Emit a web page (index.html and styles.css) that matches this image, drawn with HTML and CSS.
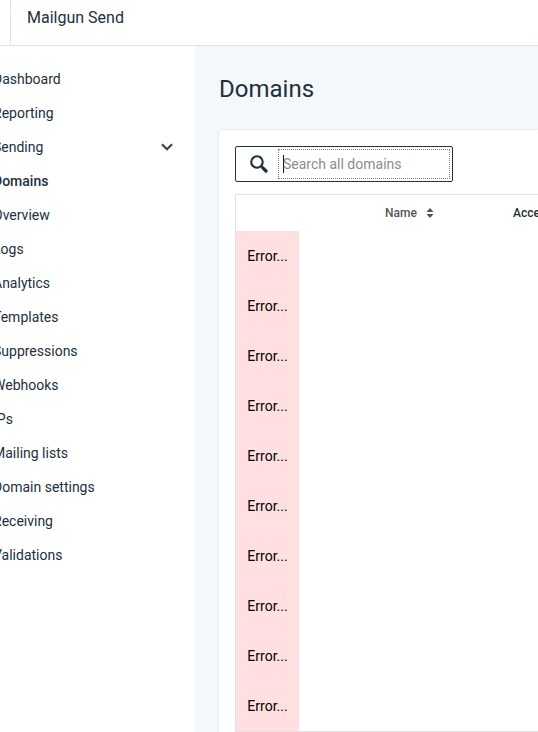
FILE: index.html
```html
<!DOCTYPE html>
<html lang="en">
<head>
    <meta charset="UTF-8">
    <meta name="viewport" content="width=device-width, initial-scale=1.0">
    <title>Domains - Mailgun Send</title>
    <link rel="stylesheet" href="styles.css">
</head>
<body>
    <div class="app">
        <header class="topbar">
            <div class="product-name">Mailgun Send</div>
        </header>

        <div class="layout">
            <nav class="sidebar">
                <a href="#">Dashboard</a>
                <a href="#">Reporting</a>
                <button class="nav-toggle" type="button" aria-expanded="true">
                    Sending
                    <svg class="chevron" viewBox="0 0 12 8" aria-hidden="true">
                        <path d="M0.9 1.2L6 6.2L11.1 1.2" fill="none" stroke="currentColor" stroke-width="2.3"/>
                    </svg>
                </button>
                <a href="#" class="active">Domains</a>
                <a href="#">Overview</a>
                <a href="#">Logs</a>
                <a href="#">Analytics</a>
                <a href="#">Templates</a>
                <a href="#">Suppressions</a>
                <a href="#">Webhooks</a>
                <a href="#">IPs</a>
                <a href="#">Mailing lists</a>
                <a href="#">Domain settings</a>
                <a href="#">Receiving</a>
                <a href="#">Validations</a>
            </nav>

            <main class="content">
                <h1>Domains</h1>

                <section class="panel">
                    <label class="search-box">
                        <svg class="search-icon" viewBox="0 0 16 16" aria-hidden="true">
                            <circle cx="6.2" cy="6.2" r="5.1" fill="none" stroke="currentColor" stroke-width="1.9"/>
                            <path d="M10 10L11.4 11.4" stroke="currentColor" stroke-width="2"/>
                            <path d="M11.6 11.6L14.2 14.2" stroke="currentColor" stroke-width="2.9" stroke-linecap="round"/>
                        </svg>
                        <input type="text" placeholder="Search all domains" aria-label="Search all domains">
                    </label>

                    <table class="domains-table">
                        <thead>
                            <tr>
                                <th class="col-status"></th>
                                <th class="col-name">
                                    <button class="sort-button" type="button">
                                        Name
                                        <svg class="sort-icon" viewBox="0 0 8 10" aria-hidden="true">
                                            <path d="M4 0L7.6 4H0.4ZM4 10L7.6 6H0.4Z" fill="currentColor"/>
                                        </svg>
                                    </button>
                                </th>
                                <th class="col-access">Access</th>
                            </tr>
                        </thead>
                        <tbody>
                            <tr><td><div class="error-cell">Error...</div></td><td></td><td></td></tr>
                            <tr><td><div class="error-cell">Error...</div></td><td></td><td></td></tr>
                            <tr><td><div class="error-cell">Error...</div></td><td></td><td></td></tr>
                            <tr><td><div class="error-cell">Error...</div></td><td></td><td></td></tr>
                            <tr><td><div class="error-cell">Error...</div></td><td></td><td></td></tr>
                            <tr><td><div class="error-cell">Error...</div></td><td></td><td></td></tr>
                            <tr><td><div class="error-cell">Error...</div></td><td></td><td></td></tr>
                            <tr><td><div class="error-cell">Error...</div></td><td></td><td></td></tr>
                            <tr><td><div class="error-cell">Error...</div></td><td></td><td></td></tr>
                            <tr><td><div class="error-cell">Error...</div></td><td></td><td></td></tr>
                        </tbody>
                    </table>
                </section>
            </main>
        </div>
    </div>
</body>
</html>
```

FILE: styles.css
```css
* {
    box-sizing: border-box;
}

body {
    margin: 0;
    height: 100vh;
    overflow: hidden;
    background-color: #fff;
    color: #232f3a;
    font-family: Roboto, Arial, sans-serif;
    font-size: 14px;
    line-height: 20px;
}

button {
    padding: 0;
    border: none;
    background: none;
    color: inherit;
    font: inherit;
    cursor: pointer;
}

/* the app is shifted a little past the left edge of the window */
.app {
    display: flex;
    flex-direction: column;
    min-height: 100vh;
    margin-left: -7px;
}

.topbar {
    display: flex;
    height: 46px;
    padding-left: 17px;
    border-bottom: 1px solid #e1e2e4;
}

.product-name {
    padding: 8px 16px;
    border-left: 1px solid #e1e2e4;
    font-size: 16px;
}

.layout {
    display: flex;
    flex: 1;
}

.sidebar {
    display: flex;
    flex-direction: column;
    flex: none;
    width: 202px;
    padding-top: 16px;
}

.sidebar a,
.nav-toggle {
    display: flex;
    align-items: center;
    justify-content: space-between;
    height: 34px;
    padding-right: 22px;
    color: inherit;
    text-decoration: none;
}

.sidebar .active {
    font-weight: 500;
}

.chevron {
    width: 12px;
    height: 8px;
    color: #3d4650;
}

.content {
    flex: 1;
    min-width: 0;
    padding: 24px 0 0 24px;
    background-color: #f4f8fb;
}

h1 {
    margin: 0 0 22px;
    font-size: 24px;
    font-weight: 400;
    line-height: 38px;
}

.panel {
    padding: 16px 0 16px 16px;
    border-radius: 4px 0 0 0;
    background-color: #fff;
    box-shadow: 0 0 2px rgba(35, 47, 58, 0.2);
}

.search-box {
    display: flex;
    align-items: center;
    width: 218px;
    height: 36px;
    padding: 0 2px 0 14px;
    border: 1px solid #232f3a;
    border-radius: 2px;
}

.search-icon {
    flex: none;
    width: 18px;
    height: 18px;
    margin-right: 10px;
}

.search-box input {
    flex: 1;
    min-width: 0;
    height: 30px;
    padding: 0 4px;
    border: 1px dotted #7d858c;
    outline: none;
    /* thin text cursor at the start of the field */
    background: linear-gradient(#111, #111) 4px center / 1px 18px no-repeat;
    color: inherit;
    font: inherit;
}

.search-box input::placeholder {
    color: #868d93;
    opacity: 1;
}

.domains-table {
    width: 100%;
    margin-top: 12px;
    border: 1px solid #e1e2e4;
    border-right: none;
    border-spacing: 0;
    table-layout: fixed;
}

.domains-table th {
    height: 36px;
    padding: 0 12px;
    font-size: 12px;
    font-weight: 500;
    text-align: left;
    white-space: nowrap;
}

.domains-table td {
    padding: 0;
}

.col-status {
    width: 137px;
}

.col-name {
    width: 128px;
}

.sort-button {
    display: flex;
    align-items: center;
    gap: 9px;
    color: #555;
}

.sort-icon {
    width: 8px;
    height: 10px;
}

.error-cell {
    width: 63px;
    height: 50px;
    padding: 15px 0;
    background-color: #ffdfe0;
    color: #000;
    text-align: center;
}
```
